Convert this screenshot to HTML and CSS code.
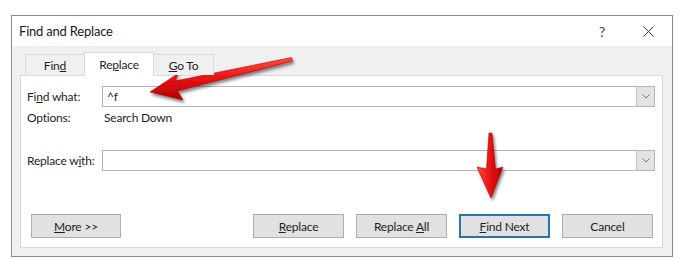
FILE: index.html
```html
<!DOCTYPE html>
<html lang="en">
<head>
  <meta charset="UTF-8">
  <title>Find and Replace</title>
  <link rel="stylesheet" href="styles.css">
</head>
<body>
  <div class="dialog">
    <div class="titlebar">
      <div class="title">Find and Replace</div>
      <div class="help">?</div>
      <div class="close">
        <svg width="11" height="11" viewBox="0 0 11 11"><path d="M0.5 0.5 L10.5 10.5 M10.5 0.5 L0.5 10.5" stroke="#333" stroke-width="1" fill="none"/></svg>
      </div>
    </div>

    <div class="tabs">
      <div class="tab tab-find">Fin<u>d</u></div>
      <div class="tab tab-active">Re<u>p</u>lace</div>
      <div class="tab tab-goto"><u>G</u>o To</div>
    </div>

    <div class="panel">
      <div class="row">
        <div class="label">Fi<u>n</u>d what:</div>
        <div class="combo">
          <div class="combo-text">^f</div>
          <div class="combo-btn">
            <svg width="8" height="5" viewBox="0 0 8 5"><path d="M0.5 0.5 L4 4 L7.5 0.5" stroke="#777" fill="none"/></svg>
          </div>
        </div>
      </div>
      <div class="row row-options">
        <div class="label">Options:</div>
        <div class="value">Search Down</div>
      </div>
      <div class="row row-replace">
        <div class="label">Replace w<u>i</u>th:</div>
        <div class="combo">
          <div class="combo-text"></div>
          <div class="combo-btn">
            <svg width="8" height="5" viewBox="0 0 8 5"><path d="M0.5 0.5 L4 4 L7.5 0.5" stroke="#777" fill="none"/></svg>
          </div>
        </div>
      </div>

      <div class="buttons">
        <button class="btn btn-more"><u>M</u>ore &gt;&gt;</button>
        <div class="btn-group">
          <button class="btn"><u>R</u>eplace</button>
          <button class="btn">Replace <u>A</u>ll</button>
          <button class="btn btn-default"><u>F</u>ind Next</button>
          <button class="btn">Cancel</button>
        </div>
      </div>
    </div>
  </div>

  <!-- annotation arrows drawn over the dialog -->
  <svg class="arrows" width="696" height="259" viewBox="0 0 696 259">
    <defs>
      <linearGradient id="red1" x1="0" y1="0" x2="0" y2="1">
        <stop offset="0" stop-color="#ff4a3d"/>
        <stop offset="0.5" stop-color="#e81313"/>
        <stop offset="1" stop-color="#b00000"/>
      </linearGradient>
      <linearGradient id="red2" x1="0" y1="0" x2="1" y2="0">
        <stop offset="0" stop-color="#ff4a3d"/>
        <stop offset="0.5" stop-color="#e81313"/>
        <stop offset="1" stop-color="#b00000"/>
      </linearGradient>
      <filter id="shadow" x="-20%" y="-20%" width="140%" height="140%">
        <feDropShadow dx="1.5" dy="2.5" stdDeviation="1.6" flood-color="#000" flood-opacity="0.5"/>
      </filter>
    </defs>
    <polygon filter="url(#shadow)" fill="url(#red1)" stroke="#b30000" stroke-width="0.6"
      points="150,92 183,100 177.5,91 292.5,61 291.5,57.5 175,81 179,73"/>
    <polygon filter="url(#shadow)" fill="url(#red2)" stroke="#b30000" stroke-width="0.6"
      points="491,198 503,167 495.5,169 492,133 489,133 486.5,169 477,167"/>
  </svg>
</body>
</html>
```

FILE: styles.css
```css
body {
  margin: 0;
  background-color: #fff;
  font-family: Lato, "Noto Sans", sans-serif;
  font-size: 12px;
  letter-spacing: -0.2px;
  color: #1e1e1e;
}

.dialog {
  width: 660px;
  height: 240px;
  margin: 15px 0 0 11px;
  border: 1px solid #8a8a8a;
  background-color: #f0f0f0;
}

.titlebar {
  height: 30px;
  background-color: #fff;
  display: flex;
  align-items: center;
}

.title {
  flex: 1;
  padding-left: 7px;
  font-size: 13px;
  color: #1a1a1a;
}

.help {
  width: 12px;
  font-size: 14px;
  color: #444;
  text-align: center;
  margin-right: 35px;
}

.close {
  width: 11px;
  margin-right: 18px;
  display: flex;
}

.tabs {
  height: 29px;
  display: flex;
  align-items: flex-end;
  padding-left: 13px;
  position: relative;
  z-index: 1;
}

.tab {
  height: 20px;
  display: flex;
  align-items: center;
  justify-content: center;
  border: 1px solid #dadada;
  border-bottom: none;
  background-color: #f0f0f0;
}

.tab-find {
  width: 58px;
  border-right: none;
}

.tab-active {
  width: 68px;
  height: 23px;
  background-color: #fff;
  margin-bottom: -1px;
}

.tab-goto {
  width: 59px;
  border-left: none;
}

.panel {
  height: 173px;
  margin: 0 9px 0 8px;
  border: 1px solid #d9d9d9;
  background-color: #fff;
  padding: 10px 7px 0 6px;
  box-sizing: border-box;
  display: flex;
  flex-direction: column;
}

.row {
  display: flex;
  align-items: center;
  height: 21px;
}

.row-replace {
  margin-top: 22px;
}

.label {
  width: 75px;
}

.value {
  padding-left: 2px;
}

.combo {
  flex: 1;
  height: 21px;
  box-sizing: border-box;
  border: 1px solid #b4b4b4;
  display: flex;
}

.combo-text {
  flex: 1;
  padding-left: 4px;
  line-height: 19px;
}

.combo-btn {
  width: 17px;
  background-color: #e3e3e3;
  border-left: 1px solid #c4c4c4;
  display: flex;
  align-items: center;
  justify-content: center;
}

.buttons {
  margin-top: 43px;
  display: flex;
  justify-content: space-between;
  padding: 0 2px 0 4px;
}

.btn-group {
  display: flex;
  gap: 12px;
}

.btn {
  width: 91px;
  height: 24px;
  box-sizing: border-box;
  border: 1px solid #adadad;
  background-color: #e1e1e1;
  font-family: Lato, "Noto Sans", sans-serif;
  font-size: 12px;
  letter-spacing: -0.2px;
  color: #1e1e1e;
  padding: 0;
}

.btn-more {
  width: 90px;
}

.btn-default {
  border: 2px solid #2b73ad;
}

.arrows {
  position: absolute;
  left: 0;
  top: 0;
  pointer-events: none;
}
```
